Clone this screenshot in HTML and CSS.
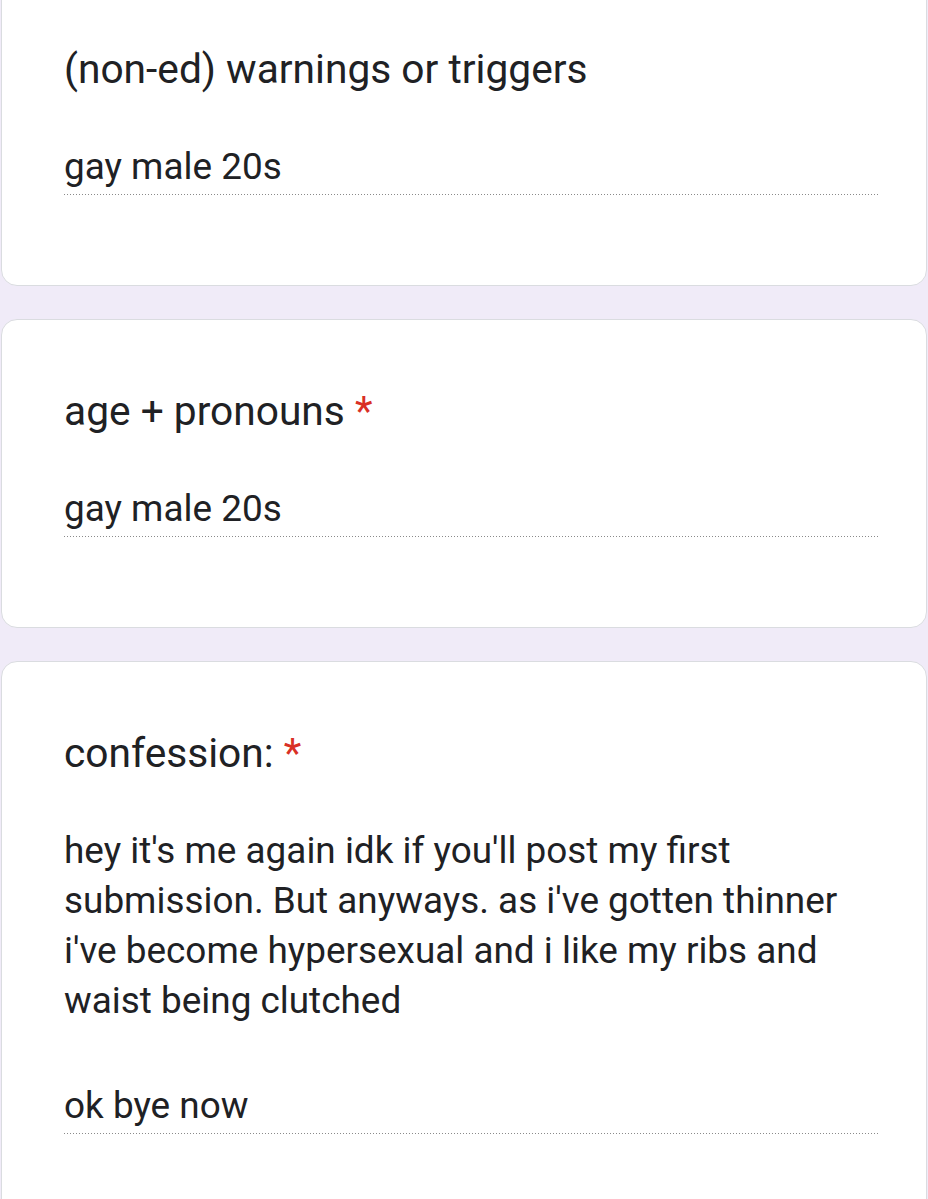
FILE: index.html
```html
<!DOCTYPE html>
<html lang="en">
<head>
<meta charset="utf-8">
<title>Form responses</title>
<link rel="stylesheet" href="styles.css">
</head>
<body>
<main class="page">
  <section class="card">
    <div class="question">(non-ed) warnings or triggers</div>
    <div class="answer">
      <p class="line">gay male 20s</p>
    </div>
  </section>
  <section class="card">
    <div class="question">age + pronouns <span class="req">*</span></div>
    <div class="answer">
      <p class="line">gay male 20s</p>
    </div>
  </section>
  <section class="card">
    <div class="question">confession: <span class="req">*</span></div>
    <div class="answer">
      <p class="line">hey it's me again idk if you'll post my first submission. But anyways. as i've gotten thinner i've become hypersexual and i like my ribs and waist being clutched</p>
      <p class="line gap">ok bye now</p>
    </div>
  </section>
</main>
</body>
</html>
```
FILE: styles.css
```css
html, body {
  margin: 0;
  padding: 0;
}
body {
  background: #f0ebf8;
  overflow: hidden;
  font-family: Roboto, "Noto Sans", Arial, sans-serif;
  color: #202124;
}
.page {
  margin-top: -23px;
  display: flex;
  flex-direction: column;
  gap: 33px;
}
.card {
  box-sizing: border-box;
  width: 926px;
  margin-left: 1px;
  background: #fff;
  border: 1px solid #dadce0;
  border-radius: 16px;
  padding: 66px 49px 90px 62px;
}
.question {
  font-size: 40.7px;
  line-height: 50px;
}
.req {
  color: #d93025;
}
.answer {
  margin-top: 48px;
  width: 814px;
  background-image: repeating-linear-gradient(to right, #8a8a8a 0 1px, transparent 1px 3px);
  background-size: 100% 1px;
  background-repeat: no-repeat;
  background-position: left bottom;
  padding-bottom: 3px;
}
.line {
  margin: 0;
  font-size: 36.9px;
  line-height: 50px;
  width: 800px;
}
.gap {
  margin-top: 55px;
}
```
